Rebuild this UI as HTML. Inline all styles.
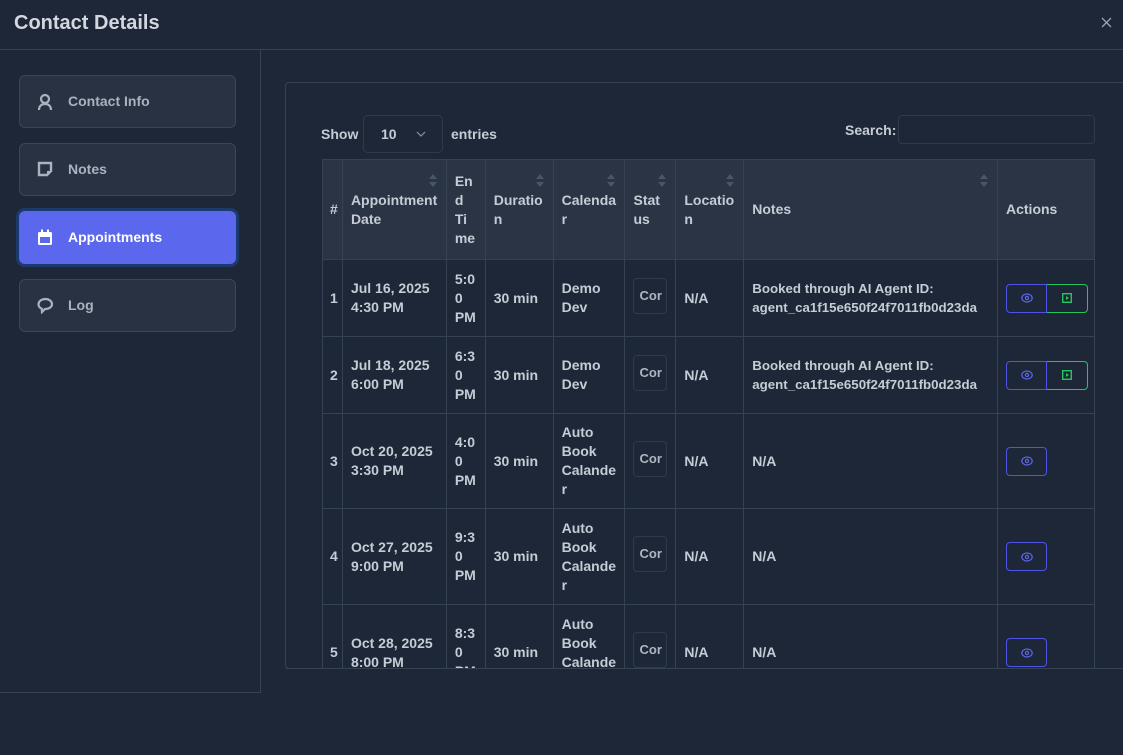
<!DOCTYPE html>
<html><head><style>
*{box-sizing:border-box;margin:0;padding:0}
body{width:1123px;height:755px;background:#1e2738;font-family:"Liberation Sans",sans-serif;color:#c6ccd5;position:relative;overflow:hidden}
.t{position:absolute;left:14px;top:12px;font-size:20px;font-weight:bold;color:#d3d7de}
.x{position:absolute;left:1101px;top:17px}
.hl{position:absolute;left:0;top:49px;width:1123px;height:1px;background:#364152}
.lp{position:absolute;left:-1px;top:49px;width:262px;height:644px;border:1px solid #364152}
.nav{position:absolute;left:19px;width:217px;height:53px;border:1px solid #3a4556;border-radius:6px;background:#283243;font-size:14px;font-weight:bold;color:#aab2be;padding-left:48px;line-height:50px}
.nav svg{position:absolute;left:17px;top:17px}
.nav.act{background:#5b67ec;color:#fff;border:1px solid #5b67ec;box-shadow:0 0 0 3px #1d3a6e}
.box{position:absolute;left:285px;top:82px;width:860px;height:587px;border:1px solid #364152;border-radius:4px;overflow:hidden}
.lbl{position:absolute;font-size:14px;font-weight:bold;color:#c6ccd5}
.sel{position:absolute;left:363px;top:115px;width:80px;height:38px;border:1px solid #2f3a4b;border-radius:5px;font-size:14px;font-weight:bold;padding:10px 0 0 17px}
.srch{position:absolute;left:898px;top:115px;width:197px;height:29px;border:1px solid #2f3a4b;border-radius:4px}
.tb{position:absolute;left:322px;top:159px;width:773px;height:509px;overflow:hidden}
table{border-collapse:collapse;table-layout:fixed}
td,th{border:1px solid #364152;font-size:14px;font-weight:bold;line-height:19px;text-align:left;padding:0 0 0 8px;vertical-align:middle;color:#c6ccd5;position:relative}
th{background:#2a3445;height:100px}
th:first-child,td:first-child{padding-left:7px}
.n{font-size:13.3px}
.s{position:absolute;top:14px;right:9px;width:8px;height:14px}
.s:before{content:"";position:absolute;left:0;top:0;border:4px solid transparent;border-bottom:5px solid #4a5567;border-top:0}
.s:after{content:"";position:absolute;left:0;top:8px;border:4px solid transparent;border-top:5px solid #4a5567;border-bottom:0}
.st{display:inline-block;width:34px;height:36px;border:1px solid #2f3a4b;border-radius:4px;font-size:13px;line-height:34px;padding-left:5px;overflow:hidden;color:#aeb5c0}
.btns{display:inline-flex}
.b{width:41px;height:29px;border:1px solid #4d55e6;border-radius:4px;display:flex;align-items:center;justify-content:center}
.b.l{border-radius:4px 0 0 4px}
.b.g{border-color:#22c55e;border-radius:0 4px 4px 0;border-left-width:0}
</style></head><body>
<div class="t">Contact Details</div>
<svg class="x" width="11" height="11" viewBox="0 0 11 11"><path d="M1 1l9 9M10 1l-9 9" stroke="#9aa3b0" stroke-width="1.3"/></svg>
<div class="hl"></div>
<div class="lp"></div>
<div class="nav" style="top:75px"><svg width="16" height="18" viewBox="0 0 16 18"><circle cx="8" cy="6" r="4" fill="none" stroke="#aab2be" stroke-width="2.2"/><path d="M2 17c0-4 2.5-6 6-6s6 2 6 6" fill="none" stroke="#aab2be" stroke-width="2.2"/></svg>Contact Info</div>
<div class="nav" style="top:143px"><svg width="16" height="16" viewBox="0 0 16 16"><path d="M2 2h12v8l-4 4H2z" fill="none" stroke="#aab2be" stroke-width="2.4"/><path d="M10 14v-4h4" fill="#aab2be"/></svg>Notes</div>
<div class="nav act" style="top:211px"><svg width="16" height="17" viewBox="0 0 16 17"><rect x="1" y="3" width="14" height="13" rx="1.5" fill="#fff"/><rect x="3" y="8" width="10" height="6" fill="#5b67ec"/><rect x="4" y="0.5" width="2" height="4" fill="#fff"/><rect x="10" y="0.5" width="2" height="4" fill="#fff"/></svg>Appointments</div>
<div class="nav" style="top:279px"><svg width="17" height="17" viewBox="0 0 17 17"><path d="M8.5 2C4.5 2 1.5 4.3 1.5 7.3c0 2 1.3 3.6 3.3 4.5L5 15l3-3c4 0 7-2 7-4.7S12.5 2 8.5 2z" fill="none" stroke="#aab2be" stroke-width="2.2"/></svg>Log</div>
<div class="box"></div>
<div class="lbl" style="left:321px;top:126px">Show</div>
<div class="sel">10<svg style="position:absolute;left:52px;top:15px" width="10" height="6" viewBox="0 0 10 6"><path d="M1 1l4 4 4-4" fill="none" stroke="#8a93a1" stroke-width="1.2"/></svg></div>
<div class="lbl" style="left:451px;top:126px">entries</div>
<div class="lbl" style="left:845px;top:122px">Search:</div>
<div class="srch"></div>
<div class="tb"><table>
<colgroup><col style="width:20px"><col style="width:104px"><col style="width:39px"><col style="width:68px"><col style="width:72px"><col style="width:51px"><col style="width:68px"><col style="width:254px"><col style="width:97px"></colgroup>
<tr><th>#</th><th>Appointment<br>Date<span class="s" style="top:14px"></span></th><th>En<br>d<br>Ti<br>me</th><th>Duratio<br>n<span class="s"></span></th><th>Calenda<br>r<span class="s"></span></th><th>Stat<br>us<span class="s"></span></th><th>Locatio<br>n<span class="s"></span></th><th>Notes<span class="s"></span></th><th>Actions</th></tr>
<tr style="height:77px"><td>1</td><td>Jul 16, 2025<br>4:30 PM</td><td>5:0<br>0<br>PM</td><td>30 min</td><td>Demo<br>Dev</td><td><span class="st">Cor</span></td><td>N/A</td><td class="n">Booked through AI Agent ID:<br>agent_ca1f15e650f24f7011fb0d23da</td><td><div class="btns"><div class="b l"><svg width="12" height="10" viewBox="0 0 12 10"><ellipse cx="6" cy="5" rx="5.2" ry="4" fill="none" stroke="#5b67ec" stroke-width="1.2"/><circle cx="6" cy="5" r="1.6" fill="none" stroke="#5b67ec" stroke-width="1.2"/></svg></div><div class="b g"><svg width="10" height="10" viewBox="0 0 10 10"><rect x="0.7" y="0.7" width="8.6" height="8.6" fill="none" stroke="#22c55e" stroke-width="1.4"/><path d="M4 3v4l3-2z" fill="#22c55e"/></svg></div></div></td></tr>
<tr style="height:77px"><td>2</td><td>Jul 18, 2025<br>6:00 PM</td><td>6:3<br>0<br>PM</td><td>30 min</td><td>Demo<br>Dev</td><td><span class="st">Cor</span></td><td>N/A</td><td class="n">Booked through AI Agent ID:<br>agent_ca1f15e650f24f7011fb0d23da</td><td><div class="btns"><div class="b l"><svg width="12" height="10" viewBox="0 0 12 10"><ellipse cx="6" cy="5" rx="5.2" ry="4" fill="none" stroke="#5b67ec" stroke-width="1.2"/><circle cx="6" cy="5" r="1.6" fill="none" stroke="#5b67ec" stroke-width="1.2"/></svg></div><div class="b g"><svg width="10" height="10" viewBox="0 0 10 10"><rect x="0.7" y="0.7" width="8.6" height="8.6" fill="none" stroke="#22c55e" stroke-width="1.4"/><path d="M4 3v4l3-2z" fill="#22c55e"/></svg></div></div></td></tr>
<tr style="height:95px"><td>3</td><td>Oct 20, 2025<br>3:30 PM</td><td>4:0<br>0<br>PM</td><td>30 min</td><td>Auto<br>Book<br>Calande<br>r</td><td><span class="st">Cor</span></td><td>N/A</td><td>N/A</td><td><div class="b"><svg width="12" height="10" viewBox="0 0 12 10"><ellipse cx="6" cy="5" rx="5.2" ry="4" fill="none" stroke="#5b67ec" stroke-width="1.2"/><circle cx="6" cy="5" r="1.6" fill="none" stroke="#5b67ec" stroke-width="1.2"/></svg></div></td></tr>
<tr style="height:96px"><td>4</td><td>Oct 27, 2025<br>9:00 PM</td><td>9:3<br>0<br>PM</td><td>30 min</td><td>Auto<br>Book<br>Calande<br>r</td><td><span class="st">Cor</span></td><td>N/A</td><td>N/A</td><td><div class="b"><svg width="12" height="10" viewBox="0 0 12 10"><ellipse cx="6" cy="5" rx="5.2" ry="4" fill="none" stroke="#5b67ec" stroke-width="1.2"/><circle cx="6" cy="5" r="1.6" fill="none" stroke="#5b67ec" stroke-width="1.2"/></svg></div></td></tr>
<tr style="height:96px"><td>5</td><td>Oct 28, 2025<br>8:00 PM</td><td>8:3<br>0<br>PM</td><td>30 min</td><td>Auto<br>Book<br>Calande<br>r</td><td><span class="st">Cor</span></td><td>N/A</td><td>N/A</td><td><div class="b"><svg width="12" height="10" viewBox="0 0 12 10"><ellipse cx="6" cy="5" rx="5.2" ry="4" fill="none" stroke="#5b67ec" stroke-width="1.2"/><circle cx="6" cy="5" r="1.6" fill="none" stroke="#5b67ec" stroke-width="1.2"/></svg></div></td></tr>
</table></div>
<div style="position:absolute;left:286px;top:668px;width:837px;height:1px;background:#364152"></div>
</body></html>
